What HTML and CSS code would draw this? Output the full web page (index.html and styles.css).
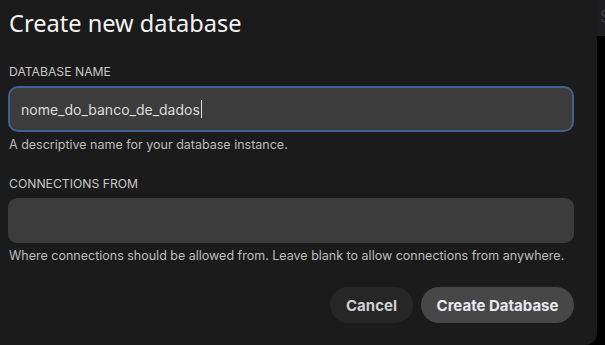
FILE: index.html
```html
<!DOCTYPE html>
<html lang="pt">
<head>
    <meta charset="UTF-8">
    <meta name="viewport" content="width=device-width, initial-scale=1.0">
    <title>Create new database</title>
    <link rel="stylesheet" href="styles.css">
</head>
<body>

    <div class="screen">
        <div class="dialog">
            <h1 class="title">Create new database</h1>

            <div class="field">
                <label class="lbl" for="dbName">DATABASE NAME</label>
                <div class="input focused">
                    <span class="value">nome_do_banco_de_dados</span><span class="caret"></span>
                </div>
                <div class="hint">A descriptive name for your database instance.</div>
            </div>

            <div class="field">
                <label class="lbl" for="connFrom">CONNECTIONS FROM</label>
                <div class="input"></div>
                <div class="hint">Where connections should be allowed from. Leave blank to allow connections from anywhere.</div>
            </div>

            <div class="actions">
                <button class="btn cancel">Cancel</button>
                <button class="btn primary">Create Database</button>
            </div>
        </div>

        <div class="side">
            <div class="side-top">S</div>
        </div>
    </div>

</body>
</html>
```

FILE: styles.css
```css
/* Général */
body {
    margin: 0;
    padding: 0;
    background: #000;
    font-family: 'Inter', 'Noto Sans', sans-serif;
    color: #ddd;
}

.screen {
    display: flex;
    width: 605px;
    height: 345px;
    overflow: hidden;
}

/* Dialogue */
.dialog {
    width: 597px;
    height: 345px;
    flex-shrink: 0;
    box-sizing: border-box;
    background: #1b1b1b;
    border-bottom-right-radius: 12px;
    padding: 0 23px 0 8px;
}

.title {
    margin: 0;
    padding: 8px 0 0 1px;
    font-family: 'Noto Sans', sans-serif;
    font-size: 23.6px;
    font-weight: 400;
    line-height: 30px;
    color: #f2f2f2;
}

.field {
    margin-top: 27px;
}

.field + .field {
    margin-top: 25px;
}

.lbl {
    display: block;
    padding-left: 1px;
    font-size: 12.2px;
    line-height: 14px;
    color: #c8c8c8;
}

.input {
    display: flex;
    align-items: center;
    height: 45px;
    box-sizing: border-box;
    margin-top: 7px;
    padding: 0 13px;
    background: #3c3c3c;
    border-radius: 9px;
}

.input.focused {
    border: 2px solid #3e6290;
    border-radius: 10px;
    height: 46px;
    padding: 0 11px;
}

.value {
    font-size: 14px;
    color: #dcdcdc;
}

.caret {
    display: inline-block;
    width: 1px;
    height: 18px;
    background: #e0e0e0;
    margin-left: 1px;
}

.hint {
    margin-top: 6px;
    padding-left: 1px;
    font-size: 12.5px;
    line-height: 14px;
    color: #bdbdbd;
}

/* Boutons */
.actions {
    display: flex;
    justify-content: flex-end;
    gap: 8px;
    margin-top: 24px;
}

.btn {
    height: 36px;
    border: none;
    border-radius: 18px;
    font-family: 'Inter', sans-serif;
    font-size: 15px;
    font-weight: 700;
    cursor: pointer;
}

.cancel {
    width: 83px;
    background: #262626;
    color: #cfcfd4;
}

.primary {
    width: 153px;
    background: #474747;
    color: #e8e8f0;
}

/* Panneau à droite */
.side {
    flex: 1;
    overflow: hidden;
}

.side-top {
    height: 36px;
    background: #1d1d1f;
    font-family: 'Inter', sans-serif;
    font-size: 16px;
    line-height: 16px;
    padding: 8px 0 0 3px;
    box-sizing: border-box;
    color: #3b4350;
}
```
